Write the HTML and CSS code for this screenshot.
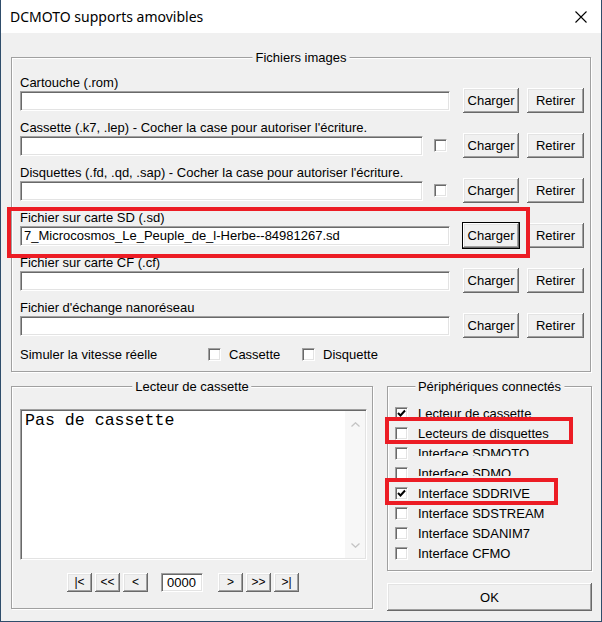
FILE: index.html
```html
<!DOCTYPE html>
<html lang="fr">
<head>
<meta charset="utf-8">
<title>DCMOTO supports amovibles</title>
<link rel="stylesheet" href="styles.css">
</head>
<body>
<div class="window">
  <div class="titlebar">
    <span class="title">DCMOTO supports amovibles</span>
    <svg class="close" width="12" height="12" viewBox="0 0 12 12"><path d="M0.5 0.5 L11.5 11.5 M11.5 0.5 L0.5 11.5" stroke="#000" stroke-width="1.1" fill="none"/></svg>
  </div>
  <div class="content">
    <div class="group files">
      <span class="legend">Fichiers images</span>
      <div class="row">
        <div class="label">Cartouche (.rom)</div>
        <div class="controls">
          <div class="field"></div>
          <button class="btn charger">Charger</button>
          <button class="btn retirer">Retirer</button>
        </div>
      </div>
      <div class="row">
        <div class="label">Cassette (.k7, .lep) - Cocher la case pour autoriser l'écriture.</div>
        <div class="controls">
          <div class="field"></div>
          <span class="check field-check"></span>
          <button class="btn charger after-check">Charger</button>
          <button class="btn retirer">Retirer</button>
        </div>
      </div>
      <div class="row">
        <div class="label">Disquettes (.fd, .qd, .sap) - Cocher la case pour autoriser l'écriture.</div>
        <div class="controls">
          <div class="field"></div>
          <span class="check field-check"></span>
          <button class="btn charger after-check">Charger</button>
          <button class="btn retirer">Retirer</button>
        </div>
      </div>
      <div class="row">
        <div class="label">Fichier sur carte SD (.sd)</div>
        <div class="controls">
          <div class="field"><span class="field-text">7_Microcosmos_Le_Peuple_de_l-Herbe--84981267.sd</span></div>
          <button class="btn charger focus">Charger</button>
          <button class="btn retirer">Retirer</button>
        </div>
      </div>
      <div class="row">
        <div class="label">Fichier sur carte CF (.cf)</div>
        <div class="controls">
          <div class="field"></div>
          <button class="btn charger">Charger</button>
          <button class="btn retirer">Retirer</button>
        </div>
      </div>
      <div class="row">
        <div class="label">Fichier d'échange nanoréseau</div>
        <div class="controls">
          <div class="field"></div>
          <button class="btn charger">Charger</button>
          <button class="btn retirer">Retirer</button>
        </div>
      </div>
      <div class="speed">
        <span class="speed-label">Simuler la vitesse réelle</span>
        <span class="speed-opt"><span class="check"></span><span class="opt-text">Cassette</span></span>
        <span class="speed-opt"><span class="check"></span><span class="opt-text">Disquette</span></span>
      </div>
    </div>

    <div class="bottom">
      <div class="group cassette">
        <span class="legend">Lecteur de cassette</span>
        <div class="textarea">
          <div class="text">Pas de cassette</div>
          <div class="scroll">
            <svg width="9" height="5" viewBox="0 0 9 5"><path d="M0.5 4.5 L4.5 0.8 L8.5 4.5" stroke="#c4c4c4" stroke-width="1.3" fill="none"/></svg>
            <svg width="9" height="5" viewBox="0 0 9 5"><path d="M0.5 0.5 L4.5 4.2 L8.5 0.5" stroke="#c4c4c4" stroke-width="1.3" fill="none"/></svg>
          </div>
        </div>
        <div class="nav">
          <button class="btn nbtn">|&lt;</button>
          <button class="btn nbtn">&lt;&lt;</button>
          <button class="btn nbtn">&lt;</button>
          <div class="counter">0000</div>
          <button class="btn nbtn">&gt;</button>
          <button class="btn nbtn">&gt;&gt;</button>
          <button class="btn nbtn">&gt;|</button>
        </div>
      </div>

      <div class="side">
        <div class="group periph">
          <span class="legend">Périphériques connectés</span>
          <div class="opt"><span class="check"><svg width="9" height="9" viewBox="0 0 9 9"><path d="M1 4 L3.5 6.5 L8 1.5" stroke="#000" stroke-width="2" fill="none"/></svg></span><span class="opt-label">Lecteur de cassette</span></div>
          <div class="opt"><span class="check"></span><span class="opt-label">Lecteurs de disquettes</span></div>
          <div class="opt clip"><span class="check"></span><span class="opt-label">Interface SDMOTO</span></div>
          <div class="opt clip"><span class="check"></span><span class="opt-label">Interface SDMO</span></div>
          <div class="opt"><span class="check"><svg width="9" height="9" viewBox="0 0 9 9"><path d="M1 4 L3.5 6.5 L8 1.5" stroke="#000" stroke-width="2" fill="none"/></svg></span><span class="opt-label">Interface SDDRIVE</span></div>
          <div class="opt"><span class="check"></span><span class="opt-label">Interface SDSTREAM</span></div>
          <div class="opt"><span class="check"></span><span class="opt-label">Interface SDANIM7</span></div>
          <div class="opt"><span class="check"></span><span class="opt-label">Interface CFMO</span></div>
        </div>
        <button class="btn ok">OK</button>
      </div>
    </div>
  </div>

  <div class="mark mark-sd"></div>
  <div class="mark mark-disk"></div>
  <div class="mark mark-sddrive"></div>
</div>
</body>
</html>
```

FILE: styles.css
```css
* { box-sizing: border-box; }
html, body { margin: 0; padding: 0; }
body {
  width: 602px;
  height: 622px;
  overflow: hidden;
  font-family: "Liberation Sans", Arial, sans-serif;
  font-size: 13px;
  color: #000;
  background: #f0f0f0;
}
.window {
  position: relative;
  width: 602px;
  height: 622px;
  border: 1px solid #2f4d6b;
  border-top: none;
  background: #f0f0f0;
}
.titlebar {
  height: 33px;
  background: #fff;
  display: flex;
  align-items: center;
  justify-content: space-between;
  padding: 0 14px 0 9px;
}
.title {
  font-family: "Noto Sans", "Open Sans", sans-serif;
  font-size: 14px;
  color: #000;
}
.close { display: block; }

.content { padding: 24px 10px 0 10px; }

.group {
  position: relative;
  border: 1px solid #a0a0a0;
  box-shadow: 1px 1px 0 #fff, inset 1px 1px 0 #fff;
}
.legend {
  position: absolute;
  top: -8px;
  left: 50%;
  transform: translateX(-50%);
  background: #f0f0f0;
  padding: 0 3px;
  line-height: 15px;
  white-space: nowrap;
}

.files {
  width: 580px;
  height: 315px;
  padding: 10px 6px 0 8px;
}
.row { height: 45px; }
.label {
  height: 20px;
  padding-top: 7px;
  line-height: 15px;
  white-space: nowrap;
}
.controls {
  height: 25px;
  display: flex;
  align-items: center;
}
.field {
  flex: 1;
  height: 20px;
  background: #fff;
  border-top: 1px solid #a0a0a0;
  border-left: 1px solid #a0a0a0;
  border-right: 1px solid #fff;
  border-bottom: 1px solid #fff;
  box-shadow: inset 1px 1px 0 #696969, inset -1px -1px 0 #e3e3e3;
  overflow: hidden;
}
.field-text {
  display: block;
  padding-left: 3px;
  line-height: 18px;
  white-space: nowrap;
}

.btn {
  font-family: "Liberation Sans", Arial, sans-serif;
  font-size: 13px;
  color: #000;
  height: 25px;
  padding: 0;
  border: none;
  background: #f0f0f0;
  box-shadow: inset -1px -1px 0 #696969, inset 1px 1px 0 #fff, inset -2px -2px 0 #a0a0a0, inset 2px 2px 0 #e3e3e3;
  flex: none;
}
.charger { width: 56px; margin-left: 13px; }
.charger.after-check { margin-left: 16px; }
.retirer { width: 57px; margin-left: 8px; }
.focus { outline: 1px solid #000; }

.check {
  position: relative;
  display: inline-flex;
  align-items: center;
  justify-content: center;
  flex: none;
  width: 13px;
  height: 13px;
  background: #fff;
  border-top: 1px solid #a0a0a0;
  border-left: 1px solid #a0a0a0;
  border-right: 1px solid #fff;
  border-bottom: 1px solid #fff;
  box-shadow: inset 1px 1px 0 #696969, inset -1px -1px 0 #e3e3e3;
}
.check svg { display: block; }
.field-check { margin-left: 11px; }

.speed {
  display: flex;
  align-items: center;
  height: 20px;
  margin-top: 6px;
}
.speed-label { width: 188px; flex: none; }
.speed-opt {
  display: flex;
  align-items: center;
  width: 94px;
  flex: none;
}
.opt-text { margin-left: 8px; }

.bottom {
  display: flex;
  margin-top: 14px;
}
.cassette {
  width: 362px;
  height: 223px;
  padding: 22px 5px 0 8px;
  flex: none;
}
.textarea {
  display: flex;
  width: 347px;
  height: 151px;
  background: #fff;
  border-top: 1px solid #a0a0a0;
  border-left: 1px solid #a0a0a0;
  border-right: 1px solid #fff;
  border-bottom: 1px solid #fff;
  box-shadow: inset 1px 1px 0 #696969, inset -1px -1px 0 #e3e3e3;
}
.text {
  flex: 1;
  font-family: "Liberation Mono", "Courier New", monospace;
  font-size: 16.6px;
  line-height: 19px;
  padding: 1px 0 0 4px;
  white-space: nowrap;
}
.scroll {
  width: 20px;
  margin: 1px 1px 1px 0;
  background: #f7f7f7;
  display: flex;
  flex-direction: column;
  justify-content: space-between;
  align-items: center;
  padding: 11px 0 10px 0;
}
.scroll svg { display: block; }

.nav {
  display: flex;
  align-items: center;
  height: 19px;
  margin: 13px 0 0 47px;
}
.nbtn {
  width: 25px;
  height: 19px;
  margin-right: 3px;
  font-size: 12px;
  line-height: 17px;
}
.counter {
  width: 42px;
  height: 19px;
  margin: 0 15px 0 10px;
  background: #fff;
  border-top: 1px solid #a0a0a0;
  border-left: 1px solid #a0a0a0;
  border-right: 1px solid #fff;
  border-bottom: 1px solid #fff;
  box-shadow: inset 1px 1px 0 #696969, inset -1px -1px 0 #e3e3e3;
  padding-left: 5px;
  line-height: 17px;
}

.side {
  width: 205px;
  margin-left: 14px;
  flex: none;
}
.periph {
  height: 185px;
  padding: 16px 0 0 7px;
}
.opt {
  display: flex;
  align-items: center;
  height: 20px;
}
.opt-label {
  margin-left: 10px;
  line-height: 15px;
  white-space: nowrap;
}
.opt.clip .opt-label {
  align-self: flex-start;
  margin-top: 3px;
  height: 10px;
  overflow: hidden;
}
.ok {
  display: block;
  width: 205px;
  height: 28px;
  margin-top: 12px;
}

.mark {
  position: absolute;
  border: 4px solid #ec1c24;
}
.mark-sd { left: 6px; top: 207px; width: 523px; height: 51px; }
.mark-disk { left: 384px; top: 417px; width: 188px; height: 27px; }
.mark-sddrive { left: 384px; top: 478px; width: 173px; height: 27px; }
```
